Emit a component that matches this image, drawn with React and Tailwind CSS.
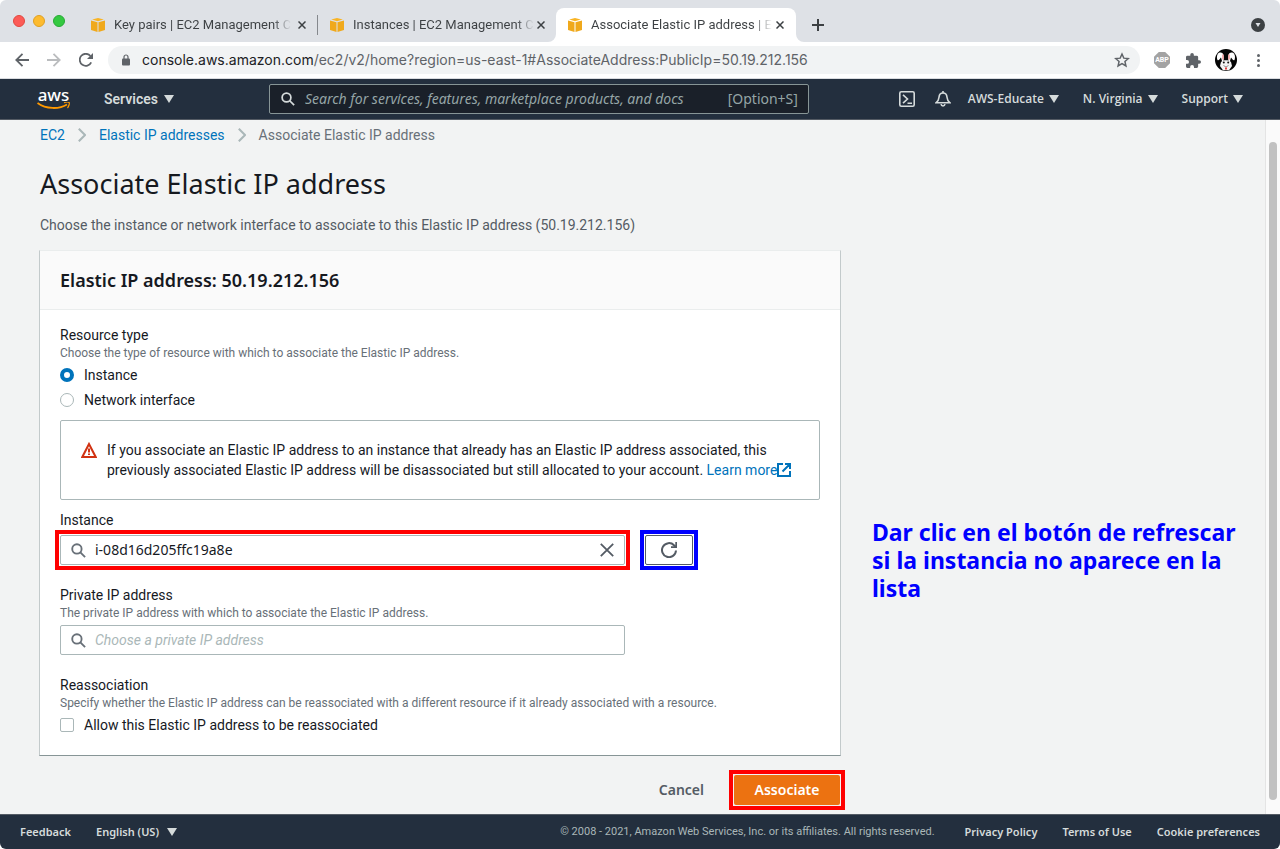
import React, { useState } from "react";

const tabs = [
  { title: "Key pairs | EC2 Management C", active: false },
  { title: "Instances | EC2 Management C", active: false },
  { title: "Associate Elastic IP address | E", active: true },
];

function Cube() {
  return (
    <svg viewBox="0 0 14 14" className="size-3.5 shrink-0" aria-hidden="true">
      <path d="M0 2.6 6.5 4.3V14L0 11.9Z" fill="#f0a91c" />
      <path d="M14 2.6 7.5 4.3V14L14 11.9Z" fill="#f0a91c" />
      <path d="M1.2 1.6 7 0l5.8 1.6L7 3.2Z" fill="#f9b424" />
    </svg>
  );
}

function Cross({ className }) {
  return (
    <svg viewBox="0 0 8 8" className={className} fill="none" stroke="currentColor" strokeWidth="1.5" aria-hidden="true">
      <path d="M.5.5l7 7M7.5.5l-7 7" />
    </svg>
  );
}

function Caret({ className = "h-2 w-2.5" }) {
  return (
    <svg viewBox="0 0 10 8" className={className} fill="currentColor" aria-hidden="true">
      <path d="M0 0h10L5 8Z" />
    </svg>
  );
}

function Glass({ className }) {
  return (
    <svg viewBox="0 0 16 16" className={className} fill="none" stroke="currentColor" strokeWidth="2" aria-hidden="true">
      <circle cx="6.3" cy="6.3" r="5" />
      <path d="M10 10l5 5" />
    </svg>
  );
}

function Tab({ title, active }) {
  return (
    <div
      className={
        active
          ? "relative -ml-px flex h-[34px] w-60 items-center rounded-t-lg bg-white px-3"
          : "flex h-[34px] w-[239px] items-center px-3"
      }
    >
      {active && (
        <>
          <svg viewBox="0 0 8 8" className="absolute bottom-0 -left-2 size-2" fill="#fff" aria-hidden="true">
            <path d="M8 0v8H0a8 8 0 0 0 8-8Z" />
          </svg>
          <svg viewBox="0 0 8 8" className="absolute -right-2 bottom-0 size-2" fill="#fff" aria-hidden="true">
            <path d="M0 0v8h8a8 8 0 0 1-8-8Z" />
          </svg>
        </>
      )}
      <Cube />
      <span className="ml-[9px] bg-linear-to-r from-[#3c4043] from-90% to-transparent bg-clip-text text-[13px] leading-5 whitespace-nowrap text-transparent">
        {title}
      </span>
      <button type="button" aria-label="Close tab" className="ml-auto text-[#3c4043]">
        <Cross className="size-2" />
      </button>
    </div>
  );
}

function Browser() {
  return (
    <div className="font-[Roboto,sans-serif]">
      <div className="flex h-[42px] items-end rounded-t-md bg-[#dee1e6]">
        <div className="flex w-[79px] shrink-0 gap-2 self-start pl-[13px] pt-[15px]">
          <span className="size-3 rounded-full border border-[#e1483f] bg-[#fc5b57]" />
          <span className="size-3 rounded-full border border-[#dfa023] bg-[#fdbb2f]" />
          <span className="size-3 rounded-full border border-[#27aa35] bg-[#34c941]" />
        </div>
        <Tab {...tabs[0]} />
        <span className="mb-[7px] -ml-px h-5 w-px bg-[#85888d]" />
        <Tab {...tabs[1]} />
        <Tab {...tabs[2]} />
        <button type="button" aria-label="New tab" className="mb-[11px] ml-4 text-[#3c4043]">
          <svg viewBox="0 0 12 12" className="size-3" stroke="currentColor" strokeWidth="2" aria-hidden="true">
            <path d="M6 0v12M0 6h12" />
          </svg>
        </button>
        <button type="button" aria-label="Search tabs" className="mb-2.5 ml-auto mr-[15px] flex size-3.5 items-center justify-center rounded-full bg-[#3c4043] text-[#dee1e6]">
          <Caret className="h-1 w-1.5" />
        </button>
      </div>
      <div className="flex h-[37px] items-center border-b border-[#dadce0] bg-white text-[#5f6368]">
        <button type="button" aria-label="Back" className="ml-[15px]">
          <svg viewBox="0 0 14 14" className="size-3.5" fill="none" stroke="currentColor" strokeWidth="1.8" aria-hidden="true">
            <path d="M14 7H1.5M7.5.8 1.3 7l6.2 6.2" />
          </svg>
        </button>
        <button type="button" aria-label="Forward" className="ml-[18px] text-[#babcbe]">
          <svg viewBox="0 0 14 14" className="size-3.5" fill="none" stroke="currentColor" strokeWidth="1.8" aria-hidden="true">
            <path d="M0 7h12.5M6.5.8 12.7 7l-6.2 6.2" />
          </svg>
        </button>
        <button type="button" aria-label="Reload" className="ml-[18px]">
          <svg viewBox="0 0 14 14" className="size-3.5" aria-hidden="true">
            <path d="M12.2 9.3A6 6 0 1 1 11.4 3" fill="none" stroke="currentColor" strokeWidth="1.8" />
            <path d="M14 0v6H8Z" fill="currentColor" />
          </svg>
        </button>
        <div className="ml-[15px] flex h-7 flex-1 items-center rounded-full bg-[#f1f3f4] pl-3.5 pr-2.5">
          <svg viewBox="0 0 8 12" className="h-3 w-2" aria-hidden="true">
            <rect x="0" y="4.5" width="8" height="7" rx="1" fill="currentColor" />
            <path d="M2 5V3a2 2 0 0 1 4 0v2" fill="none" stroke="currentColor" strokeWidth="1.2" />
          </svg>
          <p className="ml-3 flex-1 font-[Inter,sans-serif] text-sm leading-5 whitespace-nowrap">
            <span className="text-[#202124]">console.aws.amazon.com</span>
            /ec2/v2/home?region=us-east-1#AssociateAddress:PublicIp=50.19.212.156
          </p>
          <button type="button" aria-label="Bookmark">
            <svg viewBox="0 0 24 24" className="size-4" fill="none" stroke="currentColor" strokeWidth="2.2" aria-hidden="true">
              <path d="M12 3l2.7 6.2 6.8.6-5.1 4.5 1.5 6.7-5.9-3.6L6.1 21l1.5-6.7L2.5 9.800l6.8-.6Z" />
            </svg>
          </button>
        </div>
        <button type="button" className="ml-3.5 flex size-4 items-center justify-center bg-[#a3a3a3] text-[7px] font-bold text-white [clip-path:polygon(30%_0,70%_0,100%_30%,100%_70%,70%_100%,30%_100%,0_70%,0_30%)]">
          ABP
        </button>
        <button type="button" aria-label="Extensions" className="ml-4">
          <svg viewBox="2 1 21 21" className="size-[15px]" fill="currentColor" aria-hidden="true">
            <path d="M20.5 11H19V7a2 2 0 0 0-2-2h-4V3.500a2.500 2.500 0 0 0-5 0V5H4a2 2 0 0 0-2 2v3.800h1.500a2.700 2.700 0 0 1 0 5.400H2V20a2 2 0 0 0 2 2h3.800v-1.500a2.700 2.700 0 0 1 5.400 0V22H17a2 2 0 0 0 2-2v-4h1.500a2.500 2.500 0 0 0 0-5Z" />
          </svg>
        </button>
        <button type="button" aria-label="Profile" className="ml-3.5">
          <svg viewBox="0 0 22 22" className="size-[22px]" aria-hidden="true">
            <circle cx="11" cy="11" r="11" fill="#050505" />
            <path d="M8.500 12C9.500 6 8 3 5 3.500 1.800 4 1.500 8.500 2.500 11c1.200 1 2.500-1.500 3.500-2.500L7 12ZM13.500 12c-1-6 .5-9 3.500-8.500 3.200.5 3.500 5 2.500 7.500-1.200 1-2.500-1.500-3.500-2.500L15 12Z" fill="#fff" />
            <path d="M8 5.500v5M14 5.500v5" stroke="#f49a9a" strokeWidth="1.500" />
            <path d="M6 13c2-2.500 8-2.500 10 0l1 4-3 4.300H8L5 17Z" fill="#f4f4f4" />
            <circle cx="8.800" cy="13.500" r="1" fill="#111" />
            <circle cx="13.200" cy="13.500" r="1" fill="#111" />
            <path d="M8.500 16.500 11 18l2.500-1.500" fill="none" stroke="#666" strokeWidth=".7" />
            <path d="M10 18.500h2v2h-2Z" fill="#e23b3b" />
          </svg>
        </button>
        <button type="button" aria-label="Menu" className="mr-5 ml-5">
          <svg viewBox="0 0 3 13" className="h-[13px] w-[3px]" fill="currentColor" aria-hidden="true">
            <circle cx="1.500" cy="1.500" r="1.500" />
            <circle cx="1.500" cy="6.500" r="1.500" />
            <circle cx="1.500" cy="11.500" r="1.500" />
          </svg>
        </button>
      </div>
    </div>
  );
}

function ConsoleNav() {
  return (
    <nav className="flex h-[41px] items-center border-b border-[#545b64] bg-[#232f3e] text-[#d5dbdb]">
      <a href="#home" className="ml-[37px] flex w-[33px] flex-col items-center">
        <span className="text-[17px] leading-[14px] font-medium text-white">aws</span>
        <svg viewBox="0 0 33 8" className="h-2 w-[33px]" aria-hidden="true">
          <path d="M.5 1C9 7.200 22 7.500 30 2.500" fill="none" stroke="#f90" strokeWidth="1.800" />
          <path d="M27 .8c2-.8 4.500-.8 5.200-.2.500.8-.4 3.800-1.700 5.400" fill="none" stroke="#f90" strokeWidth="1.200" />
        </svg>
      </a>
      <button type="button" className="ml-[34px] flex items-center gap-1.5 font-[Roboto,sans-serif] text-sm font-semibold">
        Services <Caret />
      </button>
      <label className="ml-[95px] flex h-[30px] w-[540px] items-center rounded-xs border border-[#879596] bg-[#1a2029] pr-2.5 pl-[11px]">
        <Glass className="size-3.5" />
        <input
          aria-label="Search"
          placeholder="Search for services, features, marketplace products, and docs"
          className="ml-2.5 min-w-0 flex-1 bg-transparent text-sm italic outline-none placeholder:text-[#95a5a6]"
        />
        <span className="text-sm text-[#95a5a6]">[Option+S]</span>
      </label>
      <div className="mr-[37px] ml-auto flex items-center font-['Open_Sans',sans-serif] text-xs font-semibold">
        <button type="button" aria-label="CloudShell">
          <svg viewBox="0 0 16 16" className="size-4" fill="none" stroke="currentColor" strokeWidth="1.600" aria-hidden="true">
            <rect x=".8" y=".8" width="14.400" height="14.400" rx="1.500" />
            <path d="M4 3.800 8.500 8 4 12.200M8.500 12.200H13" />
          </svg>
        </button>
        <button type="button" aria-label="Notifications" className="ml-5">
          <svg viewBox="0 0 16 16" className="size-4" fill="none" stroke="currentColor" strokeWidth="1.600" aria-hidden="true">
            <path d="M1 11.800c2-1.400 2.800-3 3-5.600C4.200 3.600 5.600 2 8 2s3.800 1.600 4 4.200c.2 2.600 1 4.200 3 5.600Z" />
            <path d="M8 0v2M6 13.200c.5 2.400 3.500 2.400 4 0" />
          </svg>
        </button>
        <button type="button" className="ml-[17px] flex items-center gap-[5px]">AWS-Educate <Caret /></button>
        <button type="button" className="ml-6 flex items-center gap-[5px]">N. Virginia <Caret /></button>
        <button type="button" className="ml-6 flex items-center gap-[5px]">Support <Caret /></button>
      </div>
    </nav>
  );
}

function Chevron() {
  return (
    <svg viewBox="0 0 8 14" className="h-3.5 w-2 text-[#aab7b8]" fill="none" stroke="currentColor" strokeWidth="2" aria-hidden="true">
      <path d="M.8.8 7 7 .8 13.200" />
    </svg>
  );
}

function Callout({ className, children }) {
  return <div className={`-m-[5px] border-4 p-px ${className}`}>{children}</div>;
}

const radioClass =
  "size-3.5 appearance-none rounded-full border border-[#aab7b8] bg-white checked:border-[4px] checked:border-[#0073bb]";

function ResourceForm() {
  const [type, setType] = useState("instance");
  const [instance, setInstance] = useState("i-08d16d205ffc19a8e");
  return (
    <form onSubmit={(e) => e.preventDefault()}>
      <section className="border border-t-[#eaeded] border-r-[#c3cacb] border-b-[#879596] border-l-[#c3cacb] bg-white">
        <h2 className="border-b border-[#eaeded] bg-[#fafafa] px-5 py-[17px] font-['Noto_Sans',sans-serif] text-lg leading-6 font-semibold">
          Elastic IP address: 50.19.212.156
        </h2>
        <div className="px-5 pt-[15px] pb-5">
          <fieldset>
            <legend className="leading-5">Resource type</legend>
            <p className="text-xs leading-4 text-[#687078]">
              Choose the type of resource with which to associate the Elastic IP address.
            </p>
            <label className="mt-1 flex items-center gap-2.5 leading-5">
              <input type="radio" name="type" className={radioClass} checked={type === "instance"} onChange={() => setType("instance")} />
              Instance
            </label>
            <label className="mt-[5px] flex items-center gap-2.5 leading-5">
              <input type="radio" name="type" className={radioClass} checked={type === "eni"} onChange={() => setType("eni")} />
              Network interface
            </label>
          </fieldset>
          <div className="mt-2.5 flex rounded-xs border border-[#aab7b8] px-5 py-[19px]">
            <svg viewBox="0 0 16 16" className="mt-0.5 size-4 shrink-0" aria-hidden="true">
              <path d="M8 2 1.300 15h13.400Z" fill="none" stroke="#d13212" strokeWidth="2" />
              <path d="M8 6.500v4M8 11.500v1.500" stroke="#d13212" strokeWidth="2" />
            </svg>
            <p className="ml-2.5 leading-5">
              If you associate an Elastic IP address to an instance that already has an Elastic IP address associated, this
              previously associated Elastic IP address will be disassociated but still allocated to your account.{" "}
              <a href="#learn" className="whitespace-nowrap text-[#0073bb]">
                Learn more
                <svg viewBox="0 0 14 14" className="inline size-3.5 align-[-2px]" fill="none" stroke="currentColor" strokeWidth="2" aria-hidden="true">
                  <path d="M6 1H1v12h12V8M8 1h5v5M13 1 5.500 8.500" />
                </svg>
              </a>
            </p>
          </div>
          <label htmlFor="instance" className="mt-2.5 block leading-5">Instance</label>
          <div className="mt-[5px] flex gap-5">
            <Callout className="border-[#ff0000]">
              <div className="flex h-[30px] w-[565px] items-center rounded-xs border border-[#aab7b8] bg-white px-2.5">
                <Glass className="size-[15px] text-[#687078]" />
                <input
                  id="instance"
                  value={instance}
                  onChange={(e) => setInstance(e.target.value)}
                  className="ml-[9px] min-w-0 flex-1 font-['Noto_Sans',sans-serif] outline-none"
                />
                <button type="button" aria-label="Clear" onClick={() => setInstance("")} className="text-[#545b64]">
                  <svg viewBox="0 0 14 14" className="size-3.5" stroke="currentColor" strokeWidth="1.800" aria-hidden="true">
                    <path d="M.8.8l12.400 12.400M13.200.8.8 13.200" />
                  </svg>
                </button>
              </div>
            </Callout>
            <Callout className="border-[#0000ff]">
              <button
                type="button"
                aria-label="Refresh"
                className="flex h-[30px] w-12 items-center justify-center rounded-xs border border-[#545b64] bg-white text-[#545b64]"
              >
                <svg viewBox="0 0 16 16" className="size-4" aria-hidden="true">
                  <path d="M15 8.500A7 7 0 1 1 13 3.200L15 5" fill="none" stroke="currentColor" strokeWidth="2" />
                  <path d="M10 5.200h5.200V0" fill="none" stroke="currentColor" strokeWidth="1.800" />
                </svg>
              </button>
            </Callout>
          </div>
          <label htmlFor="private-ip" className="mt-5 block leading-5">Private IP address</label>
          <p className="text-xs leading-4 text-[#687078]">
            The private IP address with which to associate the Elastic IP address.
          </p>
          <div className="mt-1 flex h-[30px] w-[565px] items-center rounded-xs border border-[#aab7b8] bg-white px-2.5">
            <Glass className="size-[15px] text-[#687078]" />
            <input
              id="private-ip"
              placeholder="Choose a private IP address"
              className="ml-[9px] min-w-0 flex-1 outline-none placeholder:text-[#aab7b8] placeholder:italic"
            />
          </div>
          <fieldset className="mt-5">
            <legend className="leading-5">Reassociation</legend>
            <p className="text-xs leading-4 text-[#687078]">
              Specify whether the Elastic IP address can be reassociated with a different resource if it already associated with a resource.
            </p>
            <label className="mt-1 flex items-center gap-2.5 leading-5">
              <input type="checkbox" className="size-3.5 appearance-none rounded-xs border border-[#aab7b8] bg-white checked:bg-[#0073bb]" />
              Allow this Elastic IP address to be reassociated
            </label>
          </fieldset>
        </div>
      </section>
      <div className="mt-[19px] flex items-center justify-end gap-[30px] pr-px font-['Noto_Sans',sans-serif] font-semibold">
        <button type="button" className="text-[#545b64]">Cancel</button>
        <Callout className="border-[#ff0000]">
          <button type="submit" className="h-[30px] w-[106px] rounded-xs bg-[#ec7211] text-white">
            Associate
          </button>
        </Callout>
      </div>
    </form>
  );
}

export default function App() {
  return (
    <div className="flex h-screen flex-col overflow-hidden rounded-b-md font-['Noto_Sans','Open_Sans',sans-serif] text-[#16191f]">
      <Browser />
      <ConsoleNav />
      <div className="flex min-h-0 flex-1 bg-[#f2f3f3]">
        <main className="min-w-0 flex-1 overflow-hidden px-10 pt-[5px] font-[Roboto,sans-serif] text-sm">
          <nav className="flex items-center gap-[13px] leading-5">
            <a href="#ec2" className="text-[#0073bb]">EC2</a>
            <Chevron />
            <a href="#eip" className="text-[#0073bb]">Elastic IP addresses</a>
            <Chevron />
            <span className="text-[#687078]">Associate Elastic IP address</span>
          </nav>
          <h1 className="mt-[21px] font-['Noto_Sans',sans-serif] text-[27px] leading-9">Associate Elastic IP address</h1>
          <p className="mt-[13px] leading-5 text-[#545b64]">
            Choose the instance or network interface to associate to this Elastic IP address (50.19.212.156)
          </p>
          <div className="mt-[15px] -ml-px flex">
            <div className="w-[802px] shrink-0">
              <ResourceForm />
            </div>
            <aside className="mt-[268px] ml-[31px] font-['Noto_Sans',sans-serif] text-[23px] leading-7 font-bold whitespace-nowrap text-[#0000ff]">
              Dar clic en el botón de refrescar
              <br />
              si la instancia no aparece en la
              <br />
              lista
            </aside>
          </div>
        </main>
        <div className="flex w-[15px] shrink-0 flex-col border-l border-[#e4e4e4] bg-[#fafafa] px-[3px] pt-[22px] pb-3.5">
          <span className="flex-1 rounded-full bg-[#c1c1c1]" />
        </div>
      </div>
      <footer className="flex h-[35px] shrink-0 items-center border-t border-[#545b64] bg-[#232f3e] px-5 text-[11px] font-semibold text-[#d5dbdb]">
        <a href="#feedback">Feedback</a>
        <button type="button" className="ml-[25px] flex items-center gap-2">English (US) <Caret /></button>
        <p className="ml-auto font-[Roboto,sans-serif] font-normal text-[#aab7b8]">
          © 2008 - 2021, Amazon Web Services, Inc. or its affiliates. All rights reserved.
        </p>
        <a href="#privacy" className="ml-[30px]">Privacy Policy</a>
        <a href="#terms" className="ml-[25px]">Terms of Use</a>
        <a href="#cookies" className="ml-[25px]">Cookie preferences</a>
      </footer>
    </div>
  );
}
